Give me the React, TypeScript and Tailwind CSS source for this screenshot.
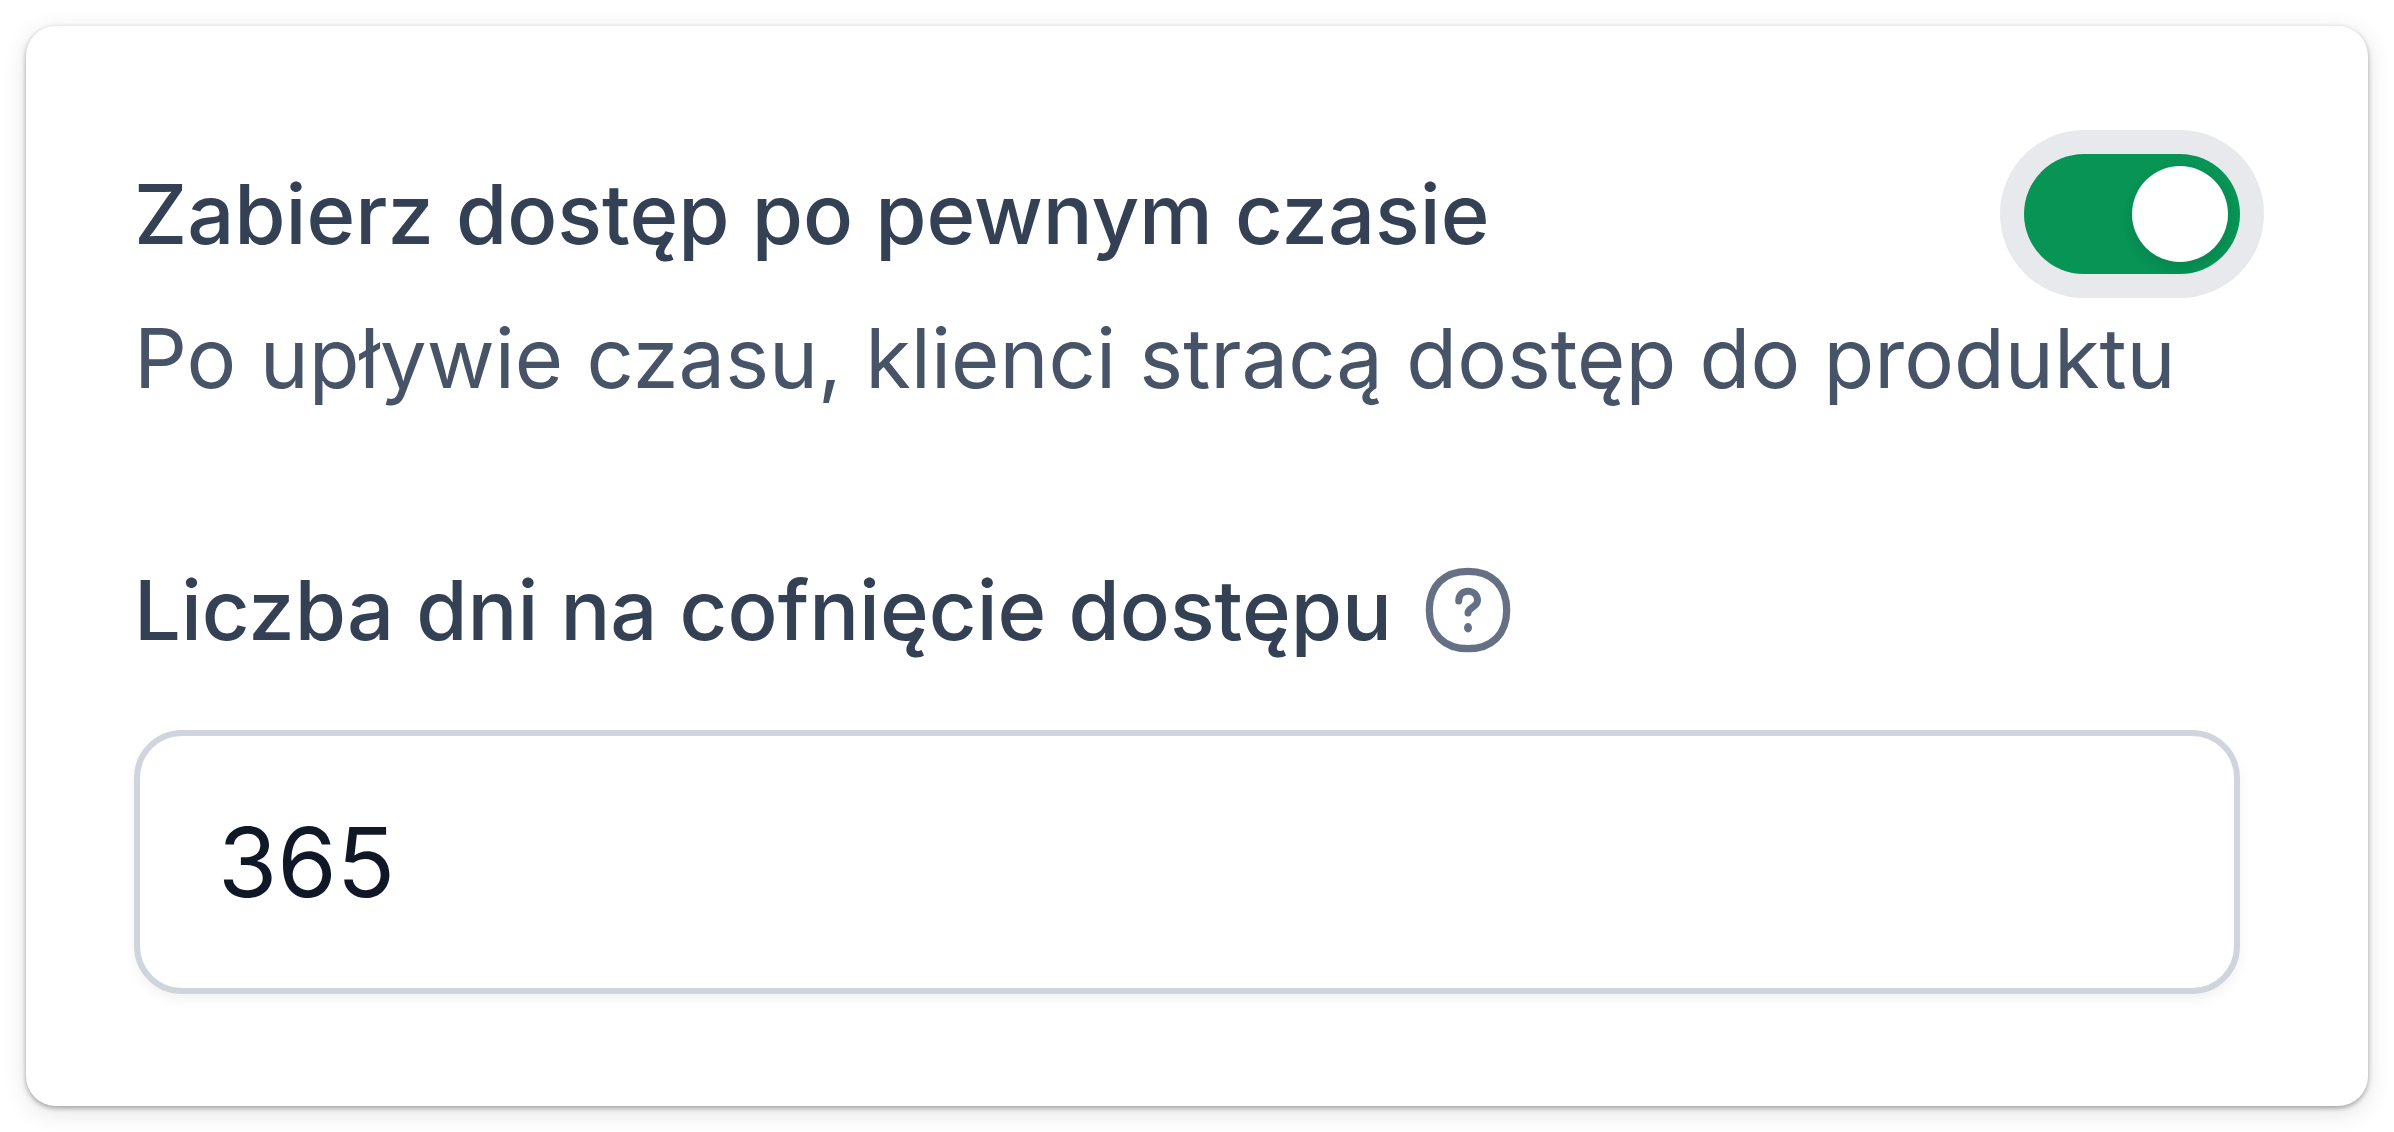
import { useState } from "react";

function HelpIcon() {
  return (
    <svg viewBox="0 0 96 96" className="size-24" fill="none" stroke="currentColor" strokeLinecap="round" strokeLinejoin="round" aria-hidden="true">
      <path d="M48 9.300C72 9.300 86.700 24 86.700 48S72 86.700 48 86.700S9.300 72 9.300 48S24 9.300 48 9.300Z" strokeWidth="7.200" />
      <path d="M38.700 39C38.700 33 42.500 29.300 48 29.300C53.500 29.300 57.500 33 57.500 38.500C57.500 45 48 45.500 48 51" strokeWidth="7" />
      <ellipse cx="48" cy="65.700" rx="4" ry="4.700" fill="currentColor" stroke="none" />
    </svg>
  );
}

export default function App() {
  const [enabled, setEnabled] = useState(true);
  const [days, setDays] = useState("365");

  return (
    <main className="bg-white p-[26px] font-['Inter',sans-serif]">
      <section className="rounded-[30px] bg-white pt-32 pr-32 pb-28 pl-[108px] shadow-[0_6px_24px_rgba(0,0,0,0.12),0_2px_5px_rgba(0,0,0,0.32)]">
        <div className="flex items-center justify-between">
          <h2 id="revoke-title" className="text-[83px] leading-[120px] font-medium text-[#344054]">
            Zabierz dostęp po pewnym czasie
          </h2>
          <button
            type="button"
            role="switch"
            aria-checked={enabled}
            aria-labelledby="revoke-title"
            aria-describedby="revoke-description"
            onClick={() => setEnabled(!enabled)}
            className={`flex h-[120px] w-[216px] items-center rounded-full p-3 ring-[24px] ring-[#e8e9ed] ${enabled ? "justify-end bg-[#079455]" : "justify-start bg-[#d0d5dd]"}`}
          >
            <span className="size-24 rounded-full bg-white shadow-[0_6px_12px_rgba(16,24,40,0.12)]" />
          </button>
        </div>
        <p id="revoke-description" className="mt-6 text-[83px] leading-[120px] text-[#475467]">
          Po upływie czasu, klienci stracą dostęp do produktu
        </p>

        <div className="mt-[132px] flex items-center gap-7">
          <label htmlFor="days" className="text-[83px] leading-[120px] font-medium text-[#344054]">
            Liczba dni na cofnięcie dostępu
          </label>
          <button type="button" aria-label="Pomoc" className="text-[#667085]">
            <HelpIcon />
          </button>
        </div>
        <input
          id="days"
          type="text"
          inputMode="numeric"
          value={days}
          onChange={(event) => setDays(event.target.value)}
          className="mt-[60px] block h-[264px] w-full rounded-[48px] border-[6px] border-[#d0d5dd] bg-white px-[78px] text-[96px] text-[#101828] shadow-[0_6px_12px_rgba(16,24,40,0.05)] outline-none"
        />
      </section>
    </main>
  );
}
